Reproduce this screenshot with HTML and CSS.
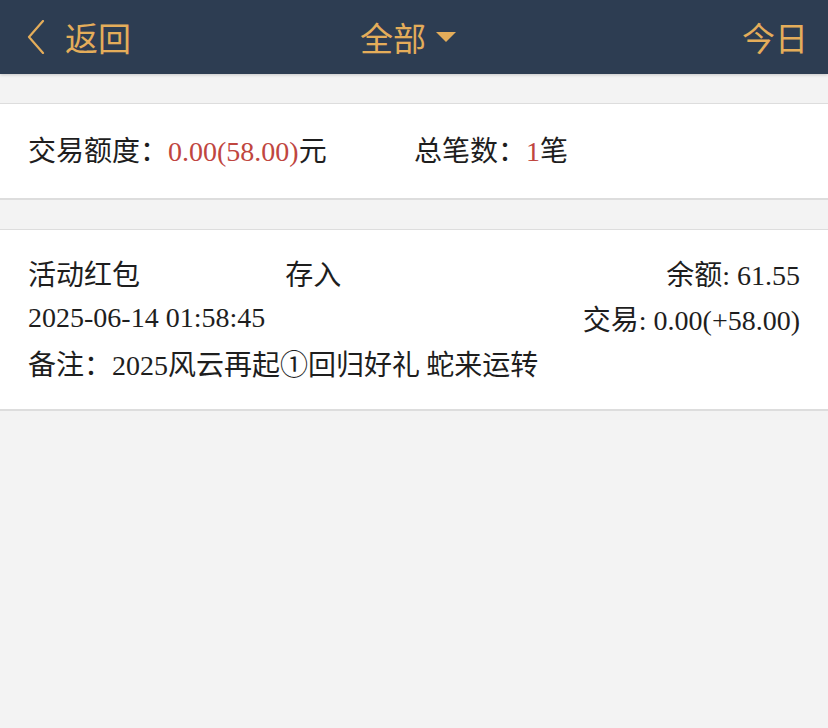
FILE: index.html
```html
<!DOCTYPE html>
<html lang="zh-CN">
<head>
  <meta charset="UTF-8">
  <meta name="viewport" content="width=device-width, initial-scale=1.0">
  <title>交易记录</title>
  <link rel="stylesheet" href="styles.css">
</head>
<body>
  <header class="topbar">
    <a class="back" href="#">
      <svg class="back-icon" width="18" height="34" viewBox="0 0 18 34">
        <polyline points="16,1 2,17 16,33" fill="none" stroke="currentColor" stroke-width="2.2" stroke-linecap="round" stroke-linejoin="round"/>
      </svg>
      <span>返回</span>
    </a>
    <div class="filter">
      <span>全部</span>
      <span class="caret"></span>
    </div>
    <a class="today" href="#">今日</a>
  </header>

  <section class="summary">
    <div class="summary-item">交易额度：<span class="num red">0.00(58.00)</span>元</div>
    <div class="summary-item">总笔数：<span class="num red">1</span>笔</div>
  </section>

  <section class="record">
    <div class="record-row">
      <div class="col">活动红包</div>
      <div class="col">存入</div>
      <div class="col right">余额<span class="num">: 61.55</span></div>
    </div>
    <div class="record-row">
      <div class="col wide num">2025-06-14 01:58:45</div>
      <div class="col right">交易<span class="num">: 0.00(+58.00)</span></div>
    </div>
    <div class="record-row">
      <div class="col wide">备注：<span class="num">2025</span>风云再起①回归好礼 蛇来运转</div>
    </div>
  </section>
</body>
</html>
```

FILE: styles.css
```css
body {
  margin: 0;
  padding: 0;
  background: #f3f3f3;
  font-family: "Noto Sans CJK SC", sans-serif;
  color: #1e1e1e;
}
.topbar {
  height: 74px;
  background: #2d3d52;
  color: #e4ad5a;
  display: flex;
  align-items: center;
  justify-content: space-between;
  padding: 0 20px 0 27px;
  box-shadow: 0 1px 3px rgba(0, 0, 0, 0.18);
  font-size: 33px;
  position: relative;
}
.topbar a {
  color: inherit;
  text-decoration: none;
}
.back {
  display: flex;
  align-items: center;
  gap: 20px;
}
.back-icon {
  display: block;
}
.filter {
  position: absolute;
  left: 0;
  right: 0;
  margin: 0 auto;
  width: max-content;
  display: flex;
  align-items: center;
  gap: 10px;
  padding-right: 12px;
}
.caret {
  width: 0;
  height: 0;
  border-left: 10px solid transparent;
  border-right: 10px solid transparent;
  border-top: 10px solid #e4ad5a;
}
.summary {
  margin-top: 29px;
  background: #fff;
  border-top: 1px solid #dddddd;
  border-bottom: 2px solid #dddddd;
  height: 94px;
  padding: 0 28px;
  display: flex;
  align-items: center;
  font-size: 28px;
}
.summary-item {
  flex: 1;
  margin-top: -4px;
}
.num {
  font-family: "Liberation Serif", "Noto Sans CJK SC", serif;
  font-size: 28px;
}
.red {
  color: #c0463f;
}
.record {
  margin-top: 29px;
  background: #fff;
  border-top: 1px solid #dddddd;
  border-bottom: 2px solid #dddddd;
  padding: 20px 28px 24px;
  font-size: 28px;
}
.record-row {
  display: flex;
  height: 45px;
  align-items: center;
}
.col {
  flex: 1;
  white-space: nowrap;
}
.col.wide {
  flex: 2;
}
.col.right {
  text-align: right;
}
```
